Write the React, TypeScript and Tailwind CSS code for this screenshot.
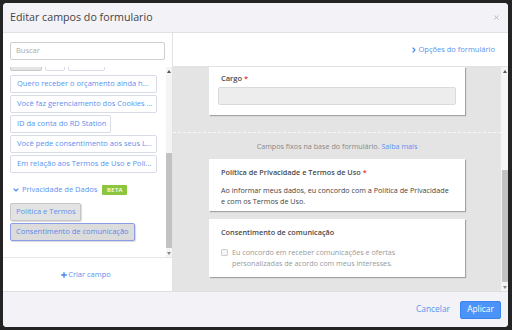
import { ChevronDown, ChevronRight, Plus, X } from "lucide-react";

const fieldItems = [
  { label: "Quero receber o orçamento ainda h...", width: "w-[147px]" },
  { label: "Você faz gerenciamento dos Cookies ...", width: "w-[147px]" },
  { label: "ID da conta do RD Station", width: "w-[101px]" },
  { label: "Você pede consentimento aos seus L...", width: "w-[147px]" },
  { label: "Em relação aos Termos de Uso e Polí...", width: "w-[147px]" },
];

function ScrollTrack({ before, thumb }: { before: string; thumb: string }) {
  return (
    <div className="flex w-[6px] flex-col items-center bg-[#f4f4f4]">
      <div className="flex h-[8px] items-center justify-center">
        <div className="h-0 w-0 border-x-[2px] border-b-[3px] border-x-transparent border-b-[#555]" />
      </div>
      <div className={before} />
      <div className={`w-[6px] rounded-[1px] bg-[#c2c2c2] ${thumb}`} />
      <div className="flex-1" />
      <div className="flex h-[8px] items-center justify-center">
        <div className="h-0 w-0 border-x-[2px] border-t-[3px] border-x-transparent border-t-[#888]" />
      </div>
    </div>
  );
}

function FieldList() {
  return (
    <div className="flex h-[190px]">
      <div className="flex-1 overflow-hidden pl-[7px]">
        <div className="flex h-[4px] gap-[3px] overflow-hidden">
          <div className="-mt-[14px] h-[18px] w-[32px] rounded-[2px] border border-[#c8c8c8] bg-[#e4e4e4]" />
          <div className="-mt-[14px] h-[18px] w-[20px] rounded-[2px] border border-[#d8dce6] bg-white" />
          <div className="-mt-[14px] h-[18px] w-[37px] rounded-[2px] border border-[#d8dce6] bg-white" />
        </div>
        <div className="mt-[4px] flex flex-col gap-[2px]">
          {fieldItems.map((item) => (
            <div
              key={item.label}
              className={`flex h-[18px] ${item.width} items-center overflow-hidden whitespace-nowrap rounded-[2px] border border-[#d8dce6] bg-white px-[6px] text-[7.5px] text-[#5a92f0]`}
            >
              {item.label}
            </div>
          ))}
        </div>
        <div className="mt-[11px] flex h-[12px] items-center">
          <ChevronDown className="ml-[2px] h-[8px] w-[8px] text-[#4f8ef7]" strokeWidth={3.5} />
          <span className="ml-[2px] text-[7.5px] text-[#5a92f0]">Privacidade de Dados</span>
          <span className="ml-[5px] flex h-[10px] w-[25px] items-center justify-center rounded-[1px] bg-[#8cc63f] text-[6px] font-semibold tracking-[0.3px] text-white">
            BETA
          </span>
        </div>
        <div className="mt-[7px] flex h-[18px] w-[71px] items-center whitespace-nowrap rounded-[2px] border border-[#c6c6c6] bg-[#e3e3e3] px-[5px] text-[7.5px] text-[#5a92f0] shadow-[1px_1px_1px_rgba(0,0,0,0.15)]">
          Política e Termos
        </div>
        <div className="mt-[2px] flex h-[18px] w-[125px] items-center whitespace-nowrap rounded-[2px] border border-[#8d9ce8] bg-[#dcdcdc] px-[5px] text-[7.5px] text-[#5a8ae8] shadow-[1px_1px_1px_rgba(0,0,0,0.15)]">
          Consentimento de comunicação
        </div>
      </div>
      <ScrollTrack before="h-[78px]" thumb="h-[95px]" />
    </div>
  );
}

function Card({ children, className = "" }: { children: React.ReactNode; className?: string }) {
  return (
    <div className={`mx-auto w-[256px] bg-white px-[12px] shadow-[1px_1px_1px_rgba(0,0,0,0.28)] ${className}`}>
      {children}
    </div>
  );
}

export default function App() {
  return (
    <div
      className="h-[330px] w-[512px] overflow-hidden bg-[#242424] pl-[3px] pt-[3px]"
      style={{ fontFamily: '"Open Sans", "Noto Sans", sans-serif' }}
    >
      <div className="flex h-[324px] w-[505px] flex-col overflow-hidden rounded-[4px] bg-white">
        <div className="flex h-[30px] shrink-0 items-center justify-between border-b border-[#e2e2e6] bg-[#f3f2f7] pl-[7px] pr-[8px]">
          <span className="text-[10.7px] text-[#444]">Editar campos do formulario</span>
          <X className="h-[7px] w-[7px] text-[#b0b0b0]" strokeWidth={3} />
        </div>

        <div className="flex h-[258px] shrink-0">
          <div className="flex w-[170px] flex-col border-r border-[#e2e2e2]">
            <div className="h-[34px] pl-[7px] pt-[9px]">
              <div className="flex h-[18px] w-[155px] items-center rounded-[2px] border border-[#cfcfcf] px-[5px] text-[7.5px] text-[#aaa]">
                Buscar
              </div>
            </div>
            <FieldList />
            <div className="flex flex-1 items-center justify-center border-t border-[#e6e6e6] pr-[4px] pt-[1px]">
              <Plus className="h-[8px] w-[8px] text-[#3d86f5]" strokeWidth={4} />
              <span className="text-[7.5px] text-[#5a92f0]">Criar campo</span>
            </div>
          </div>

          <div className="flex flex-1 flex-col">
            <div className="flex h-[34px] items-center justify-end border-b border-[#e2e2e2] pr-[13px]">
              <ChevronRight className="h-[8px] w-[8px] text-[#3d86f5]" strokeWidth={3.5} />
              <span className="ml-[1px] text-[7.5px] text-[#5a92f0]">Opções do formulário</span>
            </div>
            <div className="flex flex-1">
              <div className="flex-1 overflow-hidden bg-[#e4e4e4]">
                <Card className="pb-[10px] pt-[6px]">
                  <div className="flex h-[12px] items-center text-[7.5px] font-semibold text-[#4a4a4a]">
                    Cargo<span className="ml-[2px] text-[#e8343c]">*</span>
                  </div>
                  <div className="ml-[-3px] mt-[2px] h-[18px] w-[238px] rounded-[2px] border border-[#dadada] bg-[#ededed]" />
                </Card>
                <div className="mt-[17px] border-t border-dashed border-[#f7f7f7]" />
                <div className="mt-[8px] text-center text-[7.2px] leading-[11px] text-[#888]">
                  Campos fixos na base do formulário. <span className="text-[#5a92f0]">Saiba mais</span>
                </div>
                <Card className="mt-[7px] pb-[4px] pt-[8px]">
                  <div className="flex h-[10px] items-center text-[7.3px] font-semibold text-[#4a4a4a]">
                    Política de Privacidade e Termos de Uso<span className="ml-[2px] text-[#e8343c]">*</span>
                  </div>
                  <p className="mt-[8px] text-[7.2px] leading-[11px] text-[#444]">
                    Ao informar meus dados, eu concordo com a Política de Privacidade
                    <br />e com os Termos de Uso.
                  </p>
                </Card>
                <Card className="mt-[8px] pb-[8px] pt-[8px]">
                  <div className="flex h-[10px] items-center text-[7.3px] font-semibold text-[#4a4a4a]">
                    Consentimento de comunicação
                  </div>
                  <div className="mt-[10px] flex">
                    <div className="mt-[2px] h-[7px] w-[7px] shrink-0 rounded-[1px] border border-[#cfcfcf] bg-[#f6f6f6]" />
                    <p className="ml-[4px] text-[7.2px] leading-[11px] text-[#999]">
                      Eu concordo em receber comunicações e ofertas
                      <br />
                      personalizadas de acordo com meus interesses.
                    </p>
                  </div>
                </Card>
              </div>
              <div className="flex w-[7px] justify-center bg-[#f4f4f4]">
                <ScrollTrack before="h-[95px]" thumb="h-[112px]" />
              </div>
            </div>
          </div>
        </div>

        <div className="flex flex-1 items-center justify-end gap-[10px] border-t border-[#dedede] bg-[#f3f2f7] pr-[7px]">
          <span className="text-[8.4px] text-[#5a92f0]">Cancelar</span>
          <div className="flex h-[18px] w-[41px] items-center justify-center rounded-[2px] border border-[#3b82f0] bg-[#4c93f8] text-[8.4px] text-white">
            Aplicar
          </div>
        </div>
      </div>
    </div>
  );
}
